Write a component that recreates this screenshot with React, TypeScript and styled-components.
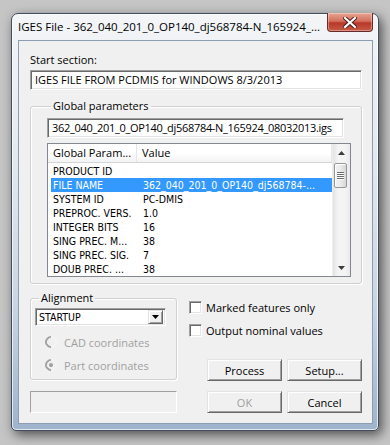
import styled, { createGlobalStyle } from "styled-components";

const SEGOE = `"Open Sans", "Noto Sans", "Liberation Sans", sans-serif`;
const SHELL = `"DejaVu Sans Condensed", "DejaVu Sans", "Liberation Sans", sans-serif`;

const GlobalStyle = createGlobalStyle`
  html, body {
    margin: 0;
    padding: 0;
  }
  body {
    width: 390px;
    height: 445px;
    overflow: hidden;
    background: #c5c5c5;
  }
`;

const rows = [
  { name: "PRODUCT ID", value: "" },
  { name: "FILE NAME", value: "362_040_201_0_OP140_dj568784-..." },
  { name: "SYSTEM ID", value: "PC-DMIS" },
  { name: "PREPROC. VERS.", value: "1.0" },
  { name: "INTEGER BITS", value: "16" },
  { name: "SING PREC. M...", value: "38" },
  { name: "SING PREC. SIG.", value: "7" },
  { name: "DOUB PREC. ...", value: "38" },
];

function App() {
  return (
    <>
      <GlobalStyle />
      <Desktop>
        <Window>
          <TitleBar>
            <Title>IGES File - 362_040_201_0_OP140_dj568784-N_165924_...</Title>
            <CloseButton>
              <svg width="14" height="11" viewBox="0 0 14 11">
                <path
                  d="M2 1 L12 10 M12 1 L2 10"
                  stroke="#4a1a1a"
                  strokeWidth="4"
                  strokeLinecap="square"
                />
                <path
                  d="M2 1 L12 10 M12 1 L2 10"
                  stroke="#fff"
                  strokeWidth="2.2"
                  strokeLinecap="square"
                />
              </svg>
            </CloseButton>
          </TitleBar>

          <Client>
            <Label>Start section:</Label>
            <TextField>IGES FILE FROM PCDMIS for WINDOWS 8/3/2013</TextField>

            <GroupBox $pad="5px 10px 6px 16px">
              <Legend>Global parameters</Legend>
              <TextField $inset>362_040_201_0_OP140_dj568784-N_165924_08032013.igs</TextField>
              <ListView>
                <ListMain>
                  <Header>
                    <HeaderCell $width={89}>Global Param...</HeaderCell>
                    <HeaderCell>Value</HeaderCell>
                  </Header>
                  {rows.map((r) => (
                    <Row key={r.name} $selected={r.name === "FILE NAME"}>
                      <NameCell>{r.name}</NameCell>
                      <ValueCell>{r.value}</ValueCell>
                    </Row>
                  ))}
                </ListMain>
                <ScrollBar>
                  <ScrollArrow>
                    <svg width="7" height="4" viewBox="0 0 7 4">
                      <path d="M0 4 L3.5 0 L7 4 Z" fill="#3c3c3c" />
                    </svg>
                  </ScrollArrow>
                  <Track>
                    <Thumb>
                      <Grip />
                      <Grip />
                      <Grip />
                      <Grip />
                    </Thumb>
                  </Track>
                  <ScrollArrow>
                    <svg width="7" height="4" viewBox="0 0 7 4">
                      <path d="M0 0 L3.5 4 L7 0 Z" fill="#3c3c3c" />
                    </svg>
                  </ScrollArrow>
                </ScrollBar>
              </ListView>
            </GroupBox>

            <BottomArea>
              <LeftColumn>
                <GroupBox $pad="3px 10px 6px 4px">
                  <Legend>Alignment</Legend>
                  <Combo>
                    <ComboText>STARTUP</ComboText>
                    <DropButton>
                      <svg width="7" height="4" viewBox="0 0 7 4">
                        <path d="M0 0 L3.5 4 L7 0 Z" fill="#000" />
                      </svg>
                    </DropButton>
                  </Combo>
                  <RadioList>
                    <RadioRow>
                      <Radio />
                      CAD coordinates
                    </RadioRow>
                    <RadioRow>
                      <Radio $checked />
                      Part coordinates
                    </RadioRow>
                  </RadioList>
                </GroupBox>
                <StatusBox />
              </LeftColumn>

              <RightColumn>
                <CheckRow>
                  <CheckBox />
                  Marked features only
                </CheckRow>
                <CheckRow>
                  <CheckBox />
                  Output nominal values
                </CheckRow>
                <ButtonGrid>
                  <Button>Process</Button>
                  <Button>Setup...</Button>
                  <Button disabled>OK</Button>
                  <Button>Cancel</Button>
                </ButtonGrid>
              </RightColumn>
            </BottomArea>
          </Client>
        </Window>
      </Desktop>
    </>
  );
}

export default App;

const Desktop = styled.div`
  width: 390px;
  height: 445px;
  box-sizing: border-box;
  padding: 13px 11px 0 11px;
  background: #c5c5c5;
`;

const Window = styled.div`
  width: 368px;
  height: 418px;
  box-sizing: border-box;
  display: flex;
  flex-direction: column;
  padding: 0 5px 6px 6px;
  border: 1px solid #3f4d5f;
  border-radius: 7px 7px 5px 5px;
  background: linear-gradient(
    #f3f5f7 0%,
    #e6ebf0 30%,
    #c9d5e2 70%,
    #9fb3cc 100%
  );
  box-shadow: 3px 4px 12px rgba(0, 0, 0, 0.6),
    inset 0 0 0 1px rgba(255, 255, 255, 0.7);
`;

const TitleBar = styled.div`
  height: 26px;
  display: flex;
  align-items: flex-start;
  justify-content: space-between;
`;

const Title = styled.div`
  font-family: ${SEGOE};
  font-size: 11.5px;
  line-height: 26px;
  color: #000;
  white-space: nowrap;
`;

const CloseButton = styled.div`
  width: 46px;
  height: 19px;
  margin-top: -1px;
  box-sizing: border-box;
  display: flex;
  align-items: center;
  justify-content: center;
  border: 1px solid #6b2a2a;
  border-top: none;
  border-radius: 0 0 4px 4px;
  background: linear-gradient(#e8a493 0%, #d4705d 45%, #b8382a 55%, #c65a45 100%);
  box-shadow: inset 0 0 0 1px rgba(255, 255, 255, 0.35);
`;

const Client = styled.div`
  flex: 1;
  display: flex;
  flex-direction: column;
  padding: 12px 10px 10px 11px;
  border: 1px solid #8c9cb2;
  background: #f0f0f0;
  font-family: ${SEGOE};
  font-size: 11px;
  color: #000;
`;

const Label = styled.div`
  line-height: 14px;
  height: 14px;
`;

const TextField = styled.div<{ $inset?: boolean }>`
  height: 20px;
  margin: ${(p) => (p.$inset ? "0 7px 5px 0" : "3px 0 9px 0")};
  box-sizing: border-box;
  padding-left: 4px;
  border: 1px solid;
  border-color: #a0a0a0 #ffffff #ffffff #a0a0a0;
  box-shadow: inset 1px 1px 0 #696969, inset -1px -1px 0 #e3e3e3;
  background: #fff;
  line-height: 18px;
  letter-spacing: ${(p) => (p.$inset ? "-0.3px" : "0")};
  white-space: nowrap;
  overflow: hidden;
`;

const GroupBox = styled.fieldset<{ $pad: string }>`
  margin: 0;
  min-inline-size: 0;
  padding: ${(p) => p.$pad};
  border: 1px solid #d0d0d0;
  border-radius: 3px;
  box-shadow: 1px 1px 0 #fff, inset 1px 1px 0 #fff;
`;

const Legend = styled.legend`
  margin-left: 4px;
  padding: 0 2px;
  line-height: 14px;
  height: 14px;
`;

const ListView = styled.div`
  height: 134px;
  box-sizing: border-box;
  display: flex;
  border: 1px solid #828790;
  background: #fff;
`;

const ListMain = styled.div`
  flex: 1;
  display: flex;
  flex-direction: column;
  font-family: ${SHELL};
  font-size: 10.5px;
`;

const Header = styled.div`
  height: 19px;
  box-sizing: border-box;
  display: flex;
  border-bottom: 1px solid #d5d5d5;
  background: linear-gradient(#ffffff 0%, #ffffff 50%, #f2f3f4 100%);
  margin-bottom: 1px;
  font-family: ${SEGOE};
  font-size: 11px;
`;

const HeaderCell = styled.div<{ $width?: number }>`
  ${(p) => (p.$width ? `width: ${p.$width}px;` : "flex: 1;")}
  box-sizing: border-box;
  padding-left: 5px;
  line-height: 18px;
  border-right: 1px solid #e3e6ea;
  white-space: nowrap;
`;

const Row = styled.div<{ $selected?: boolean }>`
  height: 14px;
  margin-left: 3px;
  display: flex;
  line-height: 14px;
  white-space: nowrap;
  background: ${(p) => (p.$selected ? "#3399ff" : "transparent")};
  color: ${(p) => (p.$selected ? "#fff" : "#000")};
`;

const NameCell = styled.div`
  width: 86px;
  padding-left: 2px;
  box-sizing: border-box;
  overflow: hidden;
`;

const ValueCell = styled.div`
  flex: 1;
  padding-left: 6px;
  overflow: hidden;
`;

const ScrollBar = styled.div`
  width: 17px;
  display: flex;
  flex-direction: column;
  background: linear-gradient(90deg, #e3e3e3 0%, #f4f4f4 30%, #f4f4f4 70%, #eaeaea 100%);
  border-left: 1px solid #eeeeee;
`;

const ScrollArrow = styled.div`
  height: 17px;
  display: flex;
  align-items: center;
  justify-content: center;
`;

const Track = styled.div`
  flex: 1;
  padding-top: 2px;
`;

const Thumb = styled.div`
  width: 13px;
  height: 25px;
  margin-left: 1px;
  box-sizing: border-box;
  display: flex;
  flex-direction: column;
  align-items: center;
  justify-content: center;
  gap: 1px;
  border: 1px solid #979797;
  border-radius: 2px;
  background: linear-gradient(90deg, #f2f2f2 0%, #ebebeb 50%, #d6d6d6 100%);
  box-shadow: inset 1px 1px 0 #fff;
`;

const Grip = styled.div`
  width: 7px;
  height: 1px;
  background: #6f6f6f;
  box-shadow: 0 1px 0 #fff;
`;

const BottomArea = styled.div`
  display: grid;
  grid-template-columns: 147px 1fr;
  column-gap: 12px;
  margin-top: 7px;
`;

const LeftColumn = styled.div`
  display: flex;
  flex-direction: column;
`;

const Combo = styled.div`
  width: 131px;
  height: 18px;
  box-sizing: border-box;
  display: flex;
  align-items: center;
  border: 1px solid;
  border-color: #a0a0a0 #ffffff #ffffff #a0a0a0;
  box-shadow: inset 1px 1px 0 #696969, inset -1px -1px 0 #e3e3e3;
  background: #fff;
  padding: 1px 2px 1px 3px;
`;

const ComboText = styled.div`
  flex: 1;
  font-family: ${SHELL};
  font-size: 10.5px;
  line-height: 14px;
`;

const DropButton = styled.div`
  width: 15px;
  height: 14px;
  box-sizing: border-box;
  display: flex;
  align-items: center;
  justify-content: center;
  background: #f0f0f0;
  border: 1px solid;
  border-color: #e3e3e3 #696969 #696969 #e3e3e3;
  box-shadow: inset 1px 1px 0 #fff, inset -1px -1px 0 #a0a0a0;
`;

const RadioList = styled.div`
  display: flex;
  flex-direction: column;
  gap: 7px;
  margin-top: 8px;
`;

const RadioRow = styled.div`
  height: 16px;
  display: flex;
  align-items: center;
  gap: 7px;
  padding-left: 10px;
  color: #a0a0a0;
  white-space: nowrap;
`;

const Radio = styled.span<{ $checked?: boolean }>`
  width: 12px;
  height: 12px;
  box-sizing: border-box;
  display: flex;
  align-items: center;
  justify-content: center;
  border-radius: 50%;
  border: 2px solid;
  border-color: #a0a0a0 #f4f4f4 #f4f4f4 #a0a0a0;
  transform: rotate(-45deg);
  background: #f0f0f0;

  &::after {
    content: "";
    width: 4px;
    height: 4px;
    border-radius: 50%;
    background: ${(p) => (p.$checked ? "#a0a0a0" : "transparent")};
  }
`;

const StatusBox = styled.div`
  height: 22px;
  margin-top: 11px;
  box-sizing: border-box;
  border: 1px solid;
  border-color: #a0a0a0 #ffffff #ffffff #a0a0a0;
`;

const RightColumn = styled.div`
  display: flex;
  flex-direction: column;
  padding-top: 8px;
`;

const CheckRow = styled.div`
  height: 16px;
  margin-bottom: 7px;
  display: flex;
  align-items: center;
  gap: 4px;
  white-space: nowrap;
`;

const CheckBox = styled.span`
  width: 13px;
  height: 13px;
  box-sizing: border-box;
  border: 1px solid;
  border-color: #a0a0a0 #ffffff #ffffff #a0a0a0;
  box-shadow: inset 1px 1px 0 #696969, inset -1px -1px 0 #e3e3e3;
  background: #fff;
`;

const ButtonGrid = styled.div`
  margin-top: auto;
  display: grid;
  grid-template-columns: 75px 75px;
  justify-content: end;
  column-gap: 5px;
  row-gap: 10px;
`;

const Button = styled.button`
  height: 22px;
  padding: 0;
  box-sizing: border-box;
  font-family: ${SEGOE};
  font-size: 11px;
  color: #000;
  background: #f0f0f0;
  border: 1px solid;
  border-color: #e3e3e3 #696969 #696969 #e3e3e3;
  box-shadow: inset 1px 1px 0 #fff, inset -1px -1px 0 #a0a0a0;

  &:disabled {
    color: #a0a0a0;
  }
`;
